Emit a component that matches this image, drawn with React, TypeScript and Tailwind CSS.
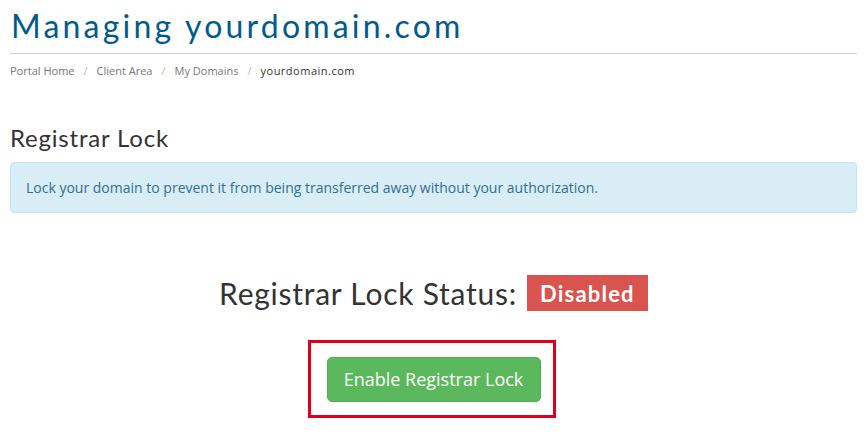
export default function App() {
    const crumbs = ["Portal Home", "Client Area", "My Domains"];
    return (
        <div className="w-[866px] h-[444px] bg-white pl-[10px] pr-[9px] overflow-hidden font-['Open_Sans',sans-serif]">
            <h1 className="pt-[6px] pl-[1px] text-[32px] leading-[40px] tracking-[3.2px] text-[#005a8e] font-['Lato',sans-serif]">
                Managing yourdomain.com
            </h1>
            <div className="mt-[7px] border-t border-[#ccc]" />
            <div className="mt-[9px] flex items-center text-[11px] leading-[16px] text-[#777]">
                {crumbs.map((c) => (
                    <span key={c} className="flex items-center">
                        {c}
                        <span className="px-[9px] text-[#bbb]">/</span>
                    </span>
                ))}
                <span className="text-[#333] tracking-[0.5px]">yourdomain.com</span>
            </div>
            <h2 className="mt-[44px] text-[24px] leading-[30px] tracking-[0.8px] text-[#333] font-['Lato',sans-serif]">
                Registrar Lock
            </h2>
            <div className="mt-[9px] h-[51px] flex items-center px-[15px] rounded-[4px] border border-[#bce8f1] bg-[#d9edf7] text-[14px] text-[#31708f]">
                Lock your domain to prevent it from being transferred away without your authorization.
            </div>
            <div className="mt-[61px] flex items-center justify-center gap-[10px]">
                <span className="text-[30px] leading-[38px] tracking-[0.75px] text-[#333] font-['Lato',sans-serif]">
                    Registrar Lock Status:
                </span>
                <span className="h-[36px] w-[121px] flex items-center justify-center bg-[#d9534f] text-white font-bold text-[22px] tracking-[1.2px] font-['Lato',sans-serif]">
                    Disabled
                </span>
            </div>
            <div className="mt-[28px] flex justify-center">
                <div className="mr-[4px] border-[3px] border-[#e0001b] pl-[16px] pr-[12px] pt-[14px] pb-[13px]">
                    <button className="h-[45px] w-[214px] rounded-[5px] border border-[#4cae4c] bg-[#5cb85c] text-white text-[18px]">
                        Enable Registrar Lock
                    </button>
                </div>
            </div>
        </div>
    );
}
